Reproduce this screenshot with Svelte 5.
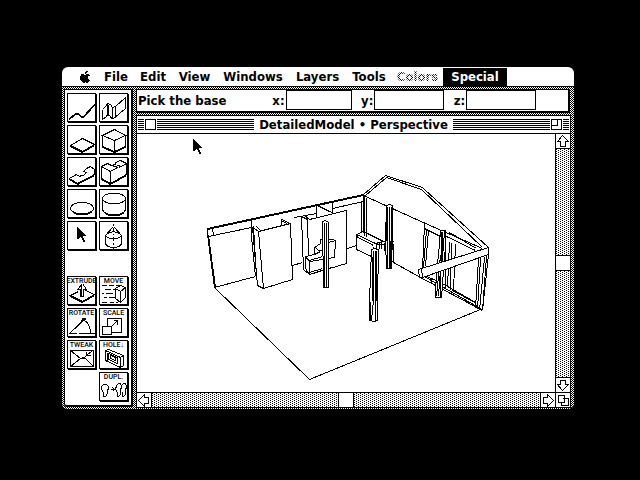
<script>
  const menus = [
    { name: 'File', width: 36 },
    { name: 'Edit', width: 38 },
    { name: 'View', width: 45 },
    { name: 'Windows', width: 72 },
    { name: 'Layers', width: 57 },
    { name: 'Tools', width: 46 },
    { name: 'Colors', width: 51, disabled: true },
    { name: 'Special', width: 64, active: true }
  ];

  const shapeTools = [
    { name: 'Polyline', d: 'M1 25 7 20H10L13 23H15L26 11M1 24 7 19H10L13 22H15L26 10' },
    { name: 'Wall', d: 'M2 15V25L6 22 7 20 10 22 11 24H13L25 14V3L15 12 12 13 10 10 7 9 5 12 2 15M7 9V20M8 10V20M12 13V24M15 12V23' },
    { name: 'Slab', d: 'M2 19 14 12 26 18 14 25 2 19M2 20 14 26 26 19' },
    { name: 'Block', d: 'M14 3 25 9 14 14 2 9 14 3M2 9V21L14 26 25 21V9M14 14V26M2 20 14 25 25 20' },
    { name: 'Free slab', d: 'M1 20 8 16 11 18 13 17 15 17 17 15 18 14 15 13 18 10 22 8 26 11V16L9 25 1 20M1 21 9 26 26 17' },
    { name: 'Free block', d: 'M1 8 7 5 11 7 15 6 15 4 20 2 26 5V16L10 25 1 20V8L10 13V26M10 13 17 9 14 8 19 7 19 9 26 5M1 21 10 26 26 17' },
    { name: 'Disc', d: 'M2 18C2 10 25 10 25 18C25 25 2 25 2 18M3 20C7 26 21 26 24 20' },
    { name: 'Cylinder', d: 'M2 8C2 1 25 1 25 8C25 15 2 15 2 8V19C3 26 24 26 25 19V8M3 21C7 27 21 27 24 21' },
    { name: 'Select', pointer: true },
    { name: 'Lathe', d: 'M13 1V3M13 5V9M13 11V12M13 14V18M13 20V22M13 24V27M12 5 5 13C6 17 20 17 21 13L14 5M5 13V21C6 26 20 26 21 21V13M7 11C11 9 16 9 19 11' }
  ];

  const editTools = [
    { name: 'EXTRUDE', d: 'M10 14 2 18 14 24 26 17 17 13M2 19 14 25 26 18M12 19V12H9L14 6 18 12H15V19ZM13 7V19' },
    { name: 'MOVE', d: 'M1 8H6M8 8H13M15 8H19M4 12H10M12 12H15M1 16H3M5 16H12M3 20H6M8 20H14M1 25H6M9 25H13M15 25H17M15 11 20 8 25 10V20L20 25 15 21ZM15 11 20 14 25 10M20 14V25' },
    { name: 'ROTATE', d: 'M1 24 18 8M1 24H8M10 24H26M14 10C20 12 22 17 22 24M13 13 14 9 18 10' },
    { name: 'SCALE', d: 'M7 17V9H21V23H11M2 17H11V25H2ZM11 17 17 11M13 11H17V15' },
    { name: 'TWEAK', d: 'M2 9H25V25H2ZM2 9 12 17 2 25M12 17H17L25 25M12 17 18 15 20 12M24 9 18 14M18 10V14H22' },
    { name: 'HOLE↓', d: 'M5 9 8 8 23 14V24L20 26 5 19ZM5 9 20 16V26M20 16 23 14M8 12 17 16V22L8 18ZM10 14 15 16V19L10 17ZM7 11V19' },
    { name: 'DUPL.', d: 'M3 11H6L8 13V15L7 17V20L5 23H3V19L1 16V13ZM10 16H14M12 14 14 16 12 18M16 12 18 10H20L21 13 20 17V21L18 23H17V19L15 16ZM21 12 23 10H25L26 13 25 17V21L23 23H22V18' }
  ];

  let coords = $state({ x: '', y: '', z: '' });
</script>

{#snippet pointer()}
  <path class="solid" d="M0 0H1V1H2V2H3V3H4V4H5V5H6V6H7V7H8V8H9V9H6V11H7V13H8V15H6V13H5V11H4V10H3V11H2V12H0Z" />
{/snippet}

<main>
  <div class="screen">
    <nav aria-label="Menu bar">
      <button class="apple" aria-label="Apple">
        <svg width="11" height="13" viewBox="0 0 11 13">
          <path class="solid" d="M5 3V1H6V0H8V1H7V2H6V3ZM1 3H4V4H6V3H9V4H10V5H8V8H9V9H10V10H9V11H8V12H6V11H5V12H3V11H2V10H1V9H0V5H1Z" />
        </svg>
      </button>
      {#each menus as menu}
        <button class:active={menu.active} disabled={menu.disabled} style:width="{menu.width}px">{menu.name}</button>
      {/each}
    </nav>

    <div class="desktop">
      <aside>
        <div class="tools">
          {#each shapeTools as tool}
            <button aria-label={tool.name}>
              <svg viewBox="0 0 27 27" width="27" height="27">
                {#if tool.pointer}
                  <g transform="translate(9 5)">{@render pointer()}</g>
                {:else}
                  <path d={tool.d} transform="translate(0.5 0.5)" />
                {/if}
              </svg>
            </button>
          {/each}
        </div>
        <div class="tools edit">
          {#each editTools as tool}
            <button>
              <span>{tool.name}</span>
              <svg viewBox="0 7 27 20" width="27" height="20"><path d={tool.d} transform="translate(0.5 0.5)" /></svg>
            </button>
          {/each}
        </div>
      </aside>

      <div class="work">
        <form class="coords">
          <p>Pick the base</p>
          <label for="cx">x:</label><input id="cx" class="short" bind:value={coords.x} />
          <label for="cy">y:</label><input id="cy" bind:value={coords.y} />
          <label for="cz">z:</label><input id="cz" bind:value={coords.z} />
        </form>

        <section class="window">
          <header>
            <button class="box" aria-label="Close"></button>
            <h1>DetailedModel • Perspective</h1>
            <button class="box zoom" aria-label="Zoom"></button>
          </header>
          <div class="view">
            <svg class="model" viewBox="137 134 418 258" preserveAspectRatio="xMinYMin meet">
              <g transform="translate(0.5 0.5)">
                <!-- floor -->
                <path d="M214 287 309 379 480 309M214 287 255 276M292 265 302 262M347 248 356 245M393 262 420 277 482 310" />
                <!-- left wall, beam and corner posts -->
                <path d="M207 229 363 195M207 228 363 194M208 236 251 227M294 217 316 213M332 208 363 201M207 228V234L214 287M208 235 215 287M212 228 213 235 208 236M251 219V236L255 276M253 226 256 277M361 201V232M363 194V232M364 196V235M366 197V236" />
                <!-- first panel -->
                <path d="M254 228 258 231 263 288 257 285 252 227ZM258 231 290 223 292 279 263 288M256 226 260 230M281 225V219L290 223M281 220 286 223V224" />
                <!-- second panel -->
                <path d="M301 216 304 215 309 219 346 210V263L309 274 303 269ZM301 216 307 219 308 255M316 216V205L332 212V202M318 205 330 212M317 204 332 201" />
                <!-- counter -->
                <path d="M305 256 314 254V247L320 243V239H332L335 240 334 257 309 261V274M305 256 309 260 322 256M305 256V268L309 274 331 267M315 247 318 250H322M314 254 320 251M305 257 310 261M328 242 335 240M309 272 322 268" />
                <!-- far roof and right wall -->
                <path d="M363 194 385 175 422 187 424 189 488 247M365 195 386 177 421 189 482 247M363 195 425 223 482 248M424 223 422 269M426 229 423 267M428 230 425 266M424 228 440 236M449 232 476 248M446 236 475 250" />
                <!-- cabinet -->
                <path d="M356 234 363 231 383 241M356 234V249L371 256M356 234 375 243M356 236 373 245M375 243 383 241H393M373 246V251M376 248V244H393V261L386 262M379 242V248M381 241V248M384 242V250" />
                <!-- windows -->
                <path d="M424 275 440 282M449 242 447 287M451 243 450 290M455 244 453 290M452 290 476 303M447 286 475 302M445 243V287M422 275 478 307M440 282 447 286M431 278V282" />
                <path d="M478 259 475 308M480 258 477 309M484 257 479 310M486 256 482 310M488 254 482 310M476 305 482 310" />
              </g>
              <g class="posts" transform="translate(0.5 0.5)">
                <path d="M322 221 325 220 328 222V287H323Z" />
                <path d="M324 222V286M326 222V286" />
                <path d="M386 205 389 204 392 205V232L391 268H386L385 240Z" />
                <path d="M387 206V268M389 206V268M391 206V268M386 220V240M390 240V268" />
                <path d="M371 249 374 248 378 249 377 299V320L373 321 369 320V301Z" />
                <path d="M373 250V300L371 320M375 250V320M376 250V300M370 301V320M372 256V300" />
                <path d="M440 230H445V245L443 270 441 297H435L436 270 438 255Z" />
                <path d="M441 231V255L438 296M444 231 441 270M440 255 436 296M442 231V260M440 270V296" />
                <path d="M418 269 488 247V254L422 277H419ZM418 269 421 268 422 277" />
              </g>
              <g transform="translate(193 139)">{@render pointer()}</g>
            </svg>
            <div class="scroll vertical">
              <button aria-label="Scroll up"><svg width="14" height="14" viewBox="0 0 14 14"><path d="M6.5 1.5 12.5 7.5H9.5V12.5H4.5V7.5H1.5Z" /></svg></button>
              <div class="track"><button class="thumb" aria-label="Vertical position"></button></div>
              <button aria-label="Scroll down"><svg width="14" height="14" viewBox="0 0 14 14"><path d="M6.5 12.5 12.5 6.5H9.5V2.5H4.5V6.5H1.5Z" /></svg></button>
            </div>
            <div class="scroll horizontal">
              <button aria-label="Scroll left"><svg width="14" height="14" viewBox="0 0 14 14"><path d="M1.5 7.5 7.5 1.5V4.5H11.5V10.5H7.5V13.5Z" /></svg></button>
              <div class="track"><button class="thumb" aria-label="Horizontal position"></button></div>
              <button aria-label="Scroll right"><svg width="14" height="14" viewBox="0 0 14 14"><path d="M12.5 7.5 6.5 1.5V4.5H2.5V10.5H6.5V13.5Z" /></svg></button>
            </div>
            <button class="grow" aria-label="Resize window"><svg width="14" height="14" viewBox="0 0 14 14"><path d="M6.5 5.5H12.5V12.5H5.5V9.5M2.5 2.5H8.5V9.5H2.5Z" /></svg></button>
          </div>
        </section>
      </div>
    </div>
  </div>
</main>

<style>
  :global(body) { background: #000; }
  * { box-sizing: border-box; }
  main {
    --checker: conic-gradient(#000 25%, #fff 0 50%, #000 0 75%, #fff 0) 0 0 / 2px 2px;
    min-height: 100vh;
    padding: 67px 66px 71px 62px;
    display: flex;
    background: #000;
    color: #000;
    font: bold 13px/18px "DejaVu Sans Condensed", "DejaVu Sans", sans-serif;
  }
  button { font: inherit; color: inherit; background: #fff; border: 0; margin: 0; padding: 0; border-radius: 0; display: block; }
  svg { display: block; fill: none; stroke: #000; stroke-width: 1; shape-rendering: crispEdges; }
  .solid { fill: #000; stroke: none; }
  .posts path:nth-child(odd) { fill: #fff; }
  .screen { flex: 1; display: flex; flex-direction: column; border-radius: 6px; overflow: hidden; background: #fff; }

  nav { display: flex; height: 20px; padding-left: 12px; border-bottom: 1px solid #000; }
  nav button { height: 18px; margin-top: 1px; white-space: nowrap; }
  nav .apple { width: 24px; padding-left: 6px; }
  nav .active { background: #000; color: #fff; }
  nav button:disabled { color: transparent; background: var(--checker); background-clip: text; }

  .desktop { flex: 1; display: flex; gap: 3px; padding: 2px 3px 1px 2px; background: var(--checker); }
  aside { width: 69px; display: flex; flex-direction: column; gap: 26px; padding: 3px 2px; margin-bottom: 1px; border: 1px solid #000; border-right-width: 2px; border-bottom-width: 2px; border-radius: 0 0 0 3px; background: #fff; }
  .tools { display: flex; flex-wrap: wrap; gap: 3px; }
  .tools button { width: 29px; height: 29px; border: 1px solid #000; box-shadow: 1px 1px #000; }
  .edit button:last-child { margin-left: auto; margin-right: 1px; }
  .edit span { display: flex; justify-content: center; height: 7px; font: 500 7px/8px Roboto, "Liberation Sans", sans-serif; white-space: nowrap; }

  .work { flex: 1; min-width: 0; display: flex; flex-direction: column; gap: 2px; }
  .coords { height: 24px; margin-right: 1px; display: flex; border: solid #000; border-width: 1px 2px 2px 1px; background: #fff; line-height: 21px; }
  .coords p { margin: 0 auto 0 1px; width: 130px; white-space: nowrap; }
  .coords label { width: 18px; text-align: right; padding-right: 1px; }
  .coords input { flex: 0 1 70px; min-width: 0; height: 20px; margin-right: 4px; padding: 0 3px; border: 1px solid #000; border-radius: 0; background: #fff; font: inherit; }
  .coords .short { flex-basis: 67px; }
  .coords input:last-child { margin-right: 32px; }

  .window { flex: 1; display: flex; flex-direction: column; border: 1px solid #000; background: #fff; }
  header { height: 18px; display: flex; justify-content: space-between; align-items: center; padding: 0 8px; border-bottom: 1px solid #000; background: repeating-linear-gradient(#000 0 1px, #fff 1px 2px) 1px 3px / calc(100% - 2px) 11px no-repeat; }
  .box { width: 11px; height: 11px; border: 1px solid #000; box-shadow: -1px 0 #fff, 1px 0 #fff; }
  .zoom { background: linear-gradient(#000, #000) 5px 0 / 1px 6px no-repeat, linear-gradient(#000, #000) 0 5px / 6px 1px no-repeat, #fff; }
  h1 { margin: 0; padding: 0 5px; font: inherit; line-height: 17px; background: #fff; white-space: nowrap; }

  .view { flex: 1; display: grid; grid-template: minmax(0, 1fr) 15px / minmax(0, 1fr) 15px; }
  .model { width: 100%; height: 100%; }
  .scroll { display: flex; border: 0 solid #000; }
  .scroll > button { width: 14px; height: 14px; }
  .vertical { flex-direction: column; border-left-width: 1px; }
  .horizontal { border-top-width: 1px; }
  .track { flex: 1; display: flex; justify-content: center; align-items: center; border: 0 solid #000; background: conic-gradient(from 270deg at 1px 1px, #000 90deg, transparent 0) 0 0 / 4px 2px, conic-gradient(from 270deg at 1px 1px, #000 90deg, transparent 0) 2px 1px / 4px 2px; background-color: #fff; }
  .vertical .track { border-width: 1px 0; }
  .horizontal .track { border-width: 0 1px; }
  .thumb { width: 14px; height: 14px; box-shadow: 0 -1px #000, 0 1px #000; }
  .horizontal .thumb { box-shadow: -1px 0 #000, 1px 0 #000; }
  .grow { border: solid #000; border-width: 1px 0 0 1px; }
</style>
